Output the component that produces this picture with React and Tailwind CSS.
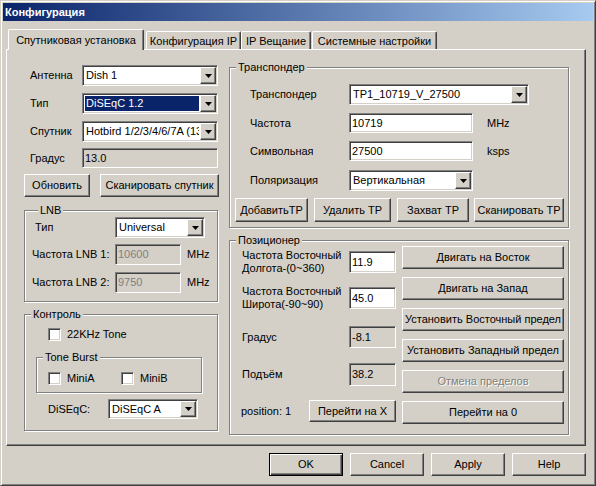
const sunken =
  "border border-t-[#808080] border-l-[#808080] border-b-white border-r-white shadow-[inset_1px_1px_0_#404040,inset_-1px_-1px_0_#d4d0c8] p-[1px]";
const raised =
  "border border-t-white border-l-white border-b-[#404040] border-r-[#404040] shadow-[inset_-1px_-1px_0_#808080]";

function Arrow() {
  return (
    <svg width="7" height="4" viewBox="0 0 7 4">
      <path d="M0 0h7L3.5 4z" fill="#000" />
    </svg>
  );
}

function Combo({ className, value, selected }) {
  return (
    <div className={`flex bg-white ${sunken} ${className}`}>
      <div className="flex min-w-0 flex-1 p-[1px]">
        <div
          className={`flex min-w-0 flex-1 items-center overflow-hidden whitespace-nowrap pl-[1px] ${
            selected ? "bg-[#0a246a] text-white" : ""
          }`}
        >
          {value}
        </div>
      </div>
      <div className={`flex w-[16px] shrink-0 items-center justify-center bg-[#d4d0c8] ${raised}`}>
        <Arrow />
      </div>
    </div>
  );
}

function Field({ className, value, disabled, grey }) {
  return (
    <div
      className={`flex items-center overflow-hidden whitespace-nowrap pl-[2px] ${sunken} ${
        grey || disabled ? "bg-[#d4d0c8]" : "bg-white"
      } ${disabled ? "text-[#808080]" : ""} ${className}`}
    >
      {value}
    </div>
  );
}

function Check() {
  return <div className={`h-[13px] w-[13px] shrink-0 bg-white ${sunken}`} />;
}

function Btn({ className, children, disabled }) {
  return (
    <button
      type="button"
      className={`flex items-center justify-center whitespace-nowrap bg-[#d4d0c8] ${raised} ${
        disabled ? "text-[#808080] [text-shadow:1px_1px_0_#fff]" : ""
      } ${className}`}
    >
      {children}
    </button>
  );
}

function Group({ title, className, children }) {
  return (
    <fieldset
      className={`border border-[#808080] shadow-[inset_1px_1px_0_#fff,1px_1px_0_#fff] ${className}`}
    >
      <legend className="ml-[6px] bg-[#d4d0c8] px-[2px] leading-[14px]">{title}</legend>
      {children}
    </fieldset>
  );
}

function Tab({ children, active, className }) {
  return (
    <div
      className={`flex items-center justify-center whitespace-nowrap rounded-t-[2px] border-t border-l border-r border-t-white border-l-white border-r-[#404040] bg-[#d4d0c8] shadow-[inset_-1px_0_0_#808080] ${
        active ? "relative z-10 h-[21px]" : "mb-[1px] h-[18px] pt-[1px]"
      } ${className}`}
    >
      {children}
    </div>
  );
}

export default function App() {
  return (
    <div className="flex h-[486px] w-[596px] flex-col border border-t-[#d4d0c8] border-l-[#d4d0c8] border-b-[#404040] border-r-[#404040] bg-[#d4d0c8] p-[2px] font-['Liberation_Sans',Arial,sans-serif] text-[11px] leading-[13px] text-black shadow-[inset_1px_1px_0_#fff,inset_-1px_-1px_0_#808080]">
      <div className="flex h-[18px] shrink-0 items-center bg-[linear-gradient(90deg,#0a246a,#a6caf0)] pl-[2px] font-bold text-white">
        Конфигурация
      </div>

      <div className="relative z-10 mt-[7px] -mb-[1px] ml-[5px] flex h-[22px] items-end">
        <Tab active className="w-[136px]">Спутниковая установка</Tab>
        <Tab className="ml-[2px] w-[95px]">Конфигурация IP</Tab>
        <Tab className="w-[70px]">IP Вещание</Tab>
        <Tab className="ml-[1px] w-[125px]">Системные настройки</Tab>
      </div>

      <div className={`ml-[3px] flex h-[397px] w-[580px] shrink-0 bg-[#d4d0c8] pl-[17px] ${raised}`}>
        {/* left column */}
        <div className="flex w-[195px] flex-col pt-[15px]">
          <div className="flex h-[21px] items-center">
            <span className="w-[58px] pl-[6px]">Антенна</span>
            <Combo className="h-[21px] w-[136px]" value="Dish 1" />
          </div>
          <div className="mt-[7px] flex h-[21px] items-center">
            <span className="w-[58px] pl-[6px]">Тип</span>
            <Combo className="h-[21px] w-[136px]" value="DiSEqC 1.2" selected />
          </div>
          <div className="mt-[7px] flex h-[21px] items-center">
            <span className="w-[58px] pl-[6px]">Спутник</span>
            <Combo className="h-[21px] w-[136px]" value="Hotbird 1/2/3/4/6/7A (13.0E)" />
          </div>
          <div className="mt-[6px] flex h-[20px] items-center">
            <span className="w-[58px] pl-[6px]">Градус</span>
            <Field className="h-[20px] w-[136px]" value="13.0" grey />
          </div>
          <div className="mt-[6px] flex h-[23px] gap-[10px]">
            <Btn className="w-[66px]">Обновить</Btn>
            <Btn className="w-[119px]">Сканировать спутник</Btn>
          </div>

          <Group title="LNB" className="mt-[6px] w-[194px] pb-[8px] pl-[7px]">
            <div className="flex h-[21px] items-center">
              <span className="w-[83px] pl-[3px]">Тип</span>
              <Combo className="h-[21px] w-[90px]" value="Universal" />
            </div>
            <div className="mt-[6px] flex h-[21px] items-center">
              <span className="w-[83px]">Частота LNB 1:</span>
              <Field className="h-[21px] w-[66px]" value="10600" disabled />
              <span className="ml-[6px]">MHz</span>
            </div>
            <div className="mt-[7px] flex h-[21px] items-center">
              <span className="w-[83px]">Частота LNB 2:</span>
              <Field className="h-[21px] w-[66px]" value="9750" disabled />
              <span className="ml-[6px]">MHz</span>
            </div>
          </Group>

          <Group title="Контроль" className="mt-[5px] w-[194px] pb-[11px]">
            <div className="mt-[7px] flex items-center pl-[23px]">
              <Check />
              <span className="ml-[6px]">22KHz Tone</span>
            </div>
            <Group title="Tone Burst" className="mt-[9px] ml-[11px] w-[166px] pb-[7px]">
              <div className="mt-[8px] flex items-center pl-[11px]">
                <div className="flex w-[73px] items-center">
                  <Check />
                  <span className="ml-[6px]">MiniA</span>
                </div>
                <Check />
                <span className="ml-[6px]">MiniB</span>
              </div>
            </Group>
            <div className="mt-[6px] flex h-[20px] items-center">
              <span className="w-[83px] pl-[23px]">DiSEqC:</span>
              <Combo className="h-[20px] w-[90px]" value="DiSEqC A" />
            </div>
          </Group>
        </div>

        {/* right column */}
        <div className="ml-[10px] flex w-[340px] flex-col pt-[10px]">
          <Group title="Транспондер" className="w-[340px] pb-[5px]">
            <div className="mt-[10px] flex h-[21px] items-center">
              <span className="w-[119px] pl-[20px]">Транспондер</span>
              <Combo className="h-[21px] w-[180px]" value="TP1_10719_V_27500" />
            </div>
            <div className="mt-[8px] flex h-[20px] items-center">
              <span className="w-[119px] pl-[20px]">Частота</span>
              <Field className="h-[20px] w-[124px]" value="10719" />
              <span className="ml-[14px]">MHz</span>
            </div>
            <div className="mt-[8px] flex h-[20px] items-center">
              <span className="w-[119px] pl-[20px]">Символьная</span>
              <Field className="h-[20px] w-[124px]" value="27500" />
              <span className="ml-[14px]">ksps</span>
            </div>
            <div className="mt-[9px] flex h-[21px] items-center">
              <span className="w-[119px] pl-[20px]">Поляризация</span>
              <Combo className="h-[21px] w-[124px]" value="Вертикальная" />
            </div>
            <div className="mt-[7px] flex h-[24px] pl-[5px]">
              <Btn className="w-[73px]">ДобавитьTP</Btn>
              <Btn className="ml-[6px] w-[77px]">Удалить TP</Btn>
              <Btn className="ml-[6px] w-[72px]">Захват TP</Btn>
              <Btn className="ml-[5px] w-[90px]">Сканировать TP</Btn>
            </div>
          </Group>

          <Group title="Позиционер" className="mt-[5px] w-[340px] pb-[10px]">
            <div className="flex">
              <div className="flex w-[166px] flex-col pl-[12px]">
                <div className="mt-[4px] flex h-[22px] items-center">
                  <span className="w-[107px]">
                    Частота Восточный
                    <br />
                    Долгота-(0~360)
                  </span>
                  <Field className="h-[22px] w-[47px]" value="11.9" />
                </div>
                <div className="mt-[14px] flex h-[22px] items-center">
                  <span className="w-[107px]">
                    Частота Восточный
                    <br />
                    Широта(-90~90)
                  </span>
                  <Field className="h-[22px] w-[47px]" value="45.0" />
                </div>
                <div className="mt-[17px] flex h-[22px] items-center">
                  <span className="w-[107px]">Градус</span>
                  <Field className="h-[22px] w-[47px]" value="-8.1" grey />
                </div>
                <div className="mt-[15px] flex h-[23px] items-center">
                  <span className="w-[107px]">Подъём</span>
                  <Field className="h-[23px] w-[47px]" value="38.2" grey />
                </div>
                <div className="mt-[14px] flex h-[22px] items-center">
                  <span className="w-[67px] -ml-[1px]">position: 1</span>
                  <Btn className="ml-[1px] h-[22px] w-[87px]">Перейти на X</Btn>
                </div>
              </div>
              <div className="-mt-[1px] ml-[6px] flex w-[162px] flex-col gap-[8px]">
                <Btn className="h-[23px]">Двигать на Восток</Btn>
                <Btn className="h-[23px]">Двигать на Запад</Btn>
                <Btn className="h-[23px]">Установить Восточный предел</Btn>
                <Btn className="h-[23px]">Установить Западный предел</Btn>
                <Btn className="h-[23px]" disabled>
                  Отмена пределов
                </Btn>
                <Btn className="h-[23px]">Перейти на 0</Btn>
              </div>
            </div>
          </Group>
        </div>
      </div>

      <div className="mt-[7px] flex w-[583px] justify-end gap-[7px]">
        <button
          type="button"
          className="flex h-[23px] w-[74px] items-center justify-center border border-black bg-[#d4d0c8] shadow-[inset_1px_1px_0_#fff,inset_-1px_-1px_0_#404040,inset_-2px_-2px_0_#808080]"
        >
          OK
        </button>
        <Btn className="h-[23px] w-[74px]">Cancel</Btn>
        <Btn className="h-[23px] w-[74px]">Apply</Btn>
        <Btn className="h-[23px] w-[74px]">Help</Btn>
      </div>
    </div>
  );
}
